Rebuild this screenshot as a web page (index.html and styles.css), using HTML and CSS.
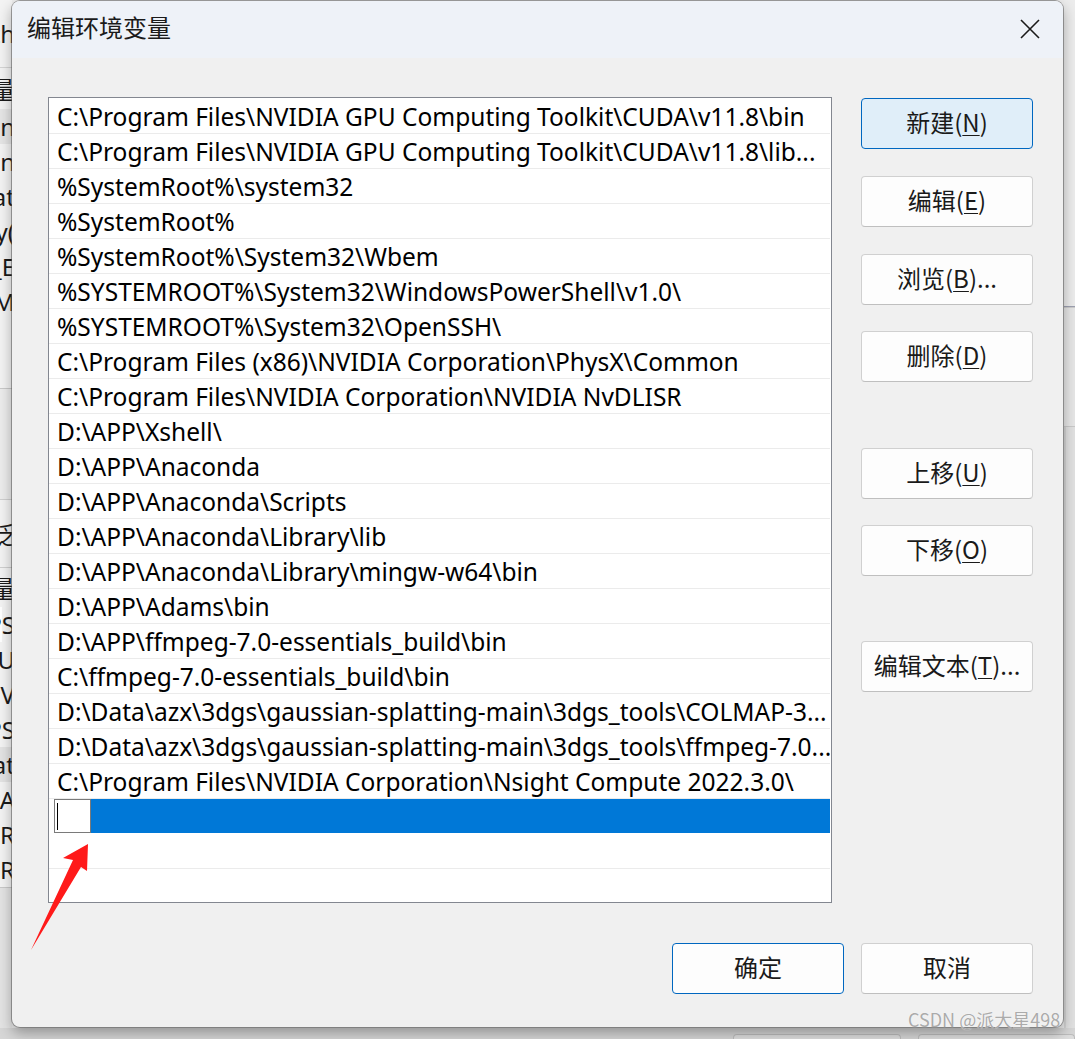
FILE: index.html
```html
<!DOCTYPE html>
<html lang="zh-CN">
<head>
<meta charset="utf-8">
<title>编辑环境变量</title>
<link rel="stylesheet" href="styles.css">
</head>
<body>
<div class="desktop">
  <div class="back-left">
    <div class="bl-top"><span>Path</span></div>
    <div class="bl-head"><span>变量</span></div>
    <div class="bl-row sel"><span>Path_in</span></div>
    <div class="bl-row"><span>Path_in</span></div>
    <div class="bl-row"><span>Path_at</span></div>
    <div class="bl-row"><span>Path_y(</span></div>
    <div class="bl-row"><span>Path_E</span></div>
    <div class="bl-row"><span>Path_M</span></div>
    <div class="bl-gap1"></div>
    <div class="bl-band"></div>
    <div class="bl-sec"><span>系统泛</span></div>
    <div class="bl-head2"><span>变量</span></div>
    <div class="bl-row mark"><span>PS</span></div>
    <div class="bl-row"><span>PU</span></div>
    <div class="bl-row"><span>PV</span></div>
    <div class="bl-row"><span>PS</span></div>
    <div class="bl-row sel2"><span>Pat</span></div>
    <div class="bl-row"><span>PA</span></div>
    <div class="bl-row"><span>PR</span></div>
    <div class="bl-row"><span>PR</span></div>
    <div class="bl-bottom"></div>
  </div>
  <div class="back-mid"></div>
  <div class="back-right">
    <div class="br-a"></div>
    <div class="br-b"></div>
    <div class="br-c"></div>
  </div>
  <div class="back-bottom">
    <div class="bb-btn one"></div>
    <div class="bb-btn two"></div>
  </div>
</div>

<div class="dialog">
  <div class="titlebar">
    <span class="title">编辑环境变量</span>
    <svg class="close" width="20" height="20" viewBox="0 0 20 20"><path d="M1 1 L19 19 M19 1 L1 19" stroke="#1a1a1a" stroke-width="1.6" fill="none"/></svg>
  </div>
  <div class="body">
    <div class="main">
      <div class="list">
        <div class="row">C:\Program Files\NVIDIA GPU Computing Toolkit\CUDA\v11.8\bin</div>
        <div class="row">C:\Program Files\NVIDIA GPU Computing Toolkit\CUDA\v11.8\lib...</div>
        <div class="row">%SystemRoot%\system32</div>
        <div class="row">%SystemRoot%</div>
        <div class="row">%SystemRoot%\System32\Wbem</div>
        <div class="row">%SYSTEMROOT%\System32\WindowsPowerShell\v1.0\</div>
        <div class="row">%SYSTEMROOT%\System32\OpenSSH\</div>
        <div class="row">C:\Program Files (x86)\NVIDIA Corporation\PhysX\Common</div>
        <div class="row">C:\Program Files\NVIDIA Corporation\NVIDIA NvDLISR</div>
        <div class="row">D:\APP\Xshell\</div>
        <div class="row">D:\APP\Anaconda</div>
        <div class="row">D:\APP\Anaconda\Scripts</div>
        <div class="row">D:\APP\Anaconda\Library\lib</div>
        <div class="row">D:\APP\Anaconda\Library\mingw-w64\bin</div>
        <div class="row">D:\APP\Adams\bin</div>
        <div class="row">D:\APP\ffmpeg-7.0-essentials_build\bin</div>
        <div class="row">C:\ffmpeg-7.0-essentials_build\bin</div>
        <div class="row">D:\Data\azx\3dgs\gaussian-splatting-main\3dgs_tools\COLMAP-3...</div>
        <div class="row">D:\Data\azx\3dgs\gaussian-splatting-main\3dgs_tools\ffmpeg-7.0...</div>
        <div class="row">C:\Program Files\NVIDIA Corporation\Nsight Compute 2022.3.0\</div>
        <div class="row editing"><div class="editbox"><span class="caret"></span></div><div class="selfill"></div></div>
        <div class="row empty"></div>
      </div>
      <div class="side">
        <button class="btn primary b-new">新建(<u>N</u>)</button>
        <button class="btn b-edit">编辑(<u>E</u>)</button>
        <button class="btn b-browse">浏览(<u>B</u>)...</button>
        <button class="btn b-del">删除(<u>D</u>)</button>
        <button class="btn b-up">上移(<u>U</u>)</button>
        <button class="btn b-down">下移(<u>O</u>)</button>
        <button class="btn b-text">编辑文本(<u>T</u>)...</button>
      </div>
    </div>
    <div class="footer">
      <button class="btn ok">确定</button>
      <button class="btn">取消</button>
    </div>
  </div>
</div>

<svg class="arrow" width="70" height="110" viewBox="0 0 70 110">
  <polygon points="58,3 33,17 43,19 1,109 51,26 57,30" fill="#ff1a1a"/>
</svg>

<div class="watermark">CSDN @派大星498</div>
</body>
</html>
```

FILE: styles.css
```css
* { box-sizing: border-box; }
html, body { margin: 0; padding: 0; }
body {
  width: 1075px;
  height: 1039px;
  overflow: hidden;
  position: relative;
  background: #f0f0f0;
  font-family: "Noto Sans", "Noto Sans CJK SC", sans-serif;
  color: #000;
}

/* ---------- background window ---------- */
.desktop {
  display: grid;
  grid-template-columns: 12px 1fr 11px;
  grid-template-rows: 1028px 11px;
  height: 1039px;
}
.back-left {
  grid-column: 1; grid-row: 1;
  overflow: hidden;
  display: flex;
  flex-direction: column;
  background: #f3f3f3;
  font-size: 24px;
  color: #1a1a1a;
}
.back-left > div {
  display: flex;
  justify-content: flex-end;
  align-items: center;
  white-space: nowrap;
  flex: none;
}
.back-left span { margin-right: -3px; }
.bl-top { height: 68px; border-bottom: 1px solid #d4d4d4; }
.bl-head { height: 41px; }
.bl-row { height: 35px; }
.bl-row.sel { background: #e5e5e5; }
.bl-row.sel2 { background: #e3e3e3; }
.bl-row.mark { box-shadow: inset 2px 0 0 #fff; }
.bl-gap1 { height: 70px; border-bottom: 1px solid #c9c9c9; }
.bl-band { height: 111px; background: #ececec; border-bottom: 1px solid #cfcfcf; }
.bl-sec { height: 68px; border-bottom: 1px solid #cfcfcf; }
.bl-head2 { height: 39px; }
.bl-bottom { flex: 1 !important; background: #e3e3e3; border-top: 1px solid #c8c8c8; }

.back-mid { grid-column: 2; grid-row: 1; background: #ebebeb; }
.back-right {
  grid-column: 3; grid-row: 1;
  background: #e6e6e6;
  display: flex;
  flex-direction: column;
}
.br-a { height: 307px; background: #ececec; border-bottom: 1px solid #9da0b0; }
.br-b { height: 120px; border-bottom: 1px solid #c9c9c9; box-shadow: inset 0 18px 0 -17px #ccc; }
.br-c { flex: 1; background: #e1e1e1; border-left: 2px solid #d4d4d4; }

.back-bottom {
  grid-column: 1 / 4; grid-row: 2;
  background: #d6d6d6;
  display: flex;
  align-items: flex-end;
  padding-left: 733px;
  gap: 17px;
}
.bb-btn {
  height: 5px;
  width: 172px;
  border: 1px solid #bdbdbd;
  border-bottom: none;
  border-radius: 4px 4px 0 0;
  background: #dedede;
}
.bb-btn.two { width: 160px; }

/* ---------- dialog ---------- */
.dialog {
  position: absolute;
  left: 12px;
  top: 1px;
  width: 1051px;
  height: 1026px;
  background: #f0f0f0;
  border-radius: 8px;
  overflow: hidden;
  box-shadow: 0 0 0 1px rgba(90, 90, 90, 0.55), 0 6px 14px rgba(0, 0, 0, 0.32);
  display: flex;
  flex-direction: column;
  font-family: "Noto Sans", "Noto Sans CJK SC", sans-serif;
}
.titlebar {
  height: 57px;
  flex: none;
  background: #eef2f8;
  display: flex;
  align-items: center;
  justify-content: space-between;
  padding: 0 23px 0 15px;
}
.title {
  font-family: "Noto Sans CJK SC", sans-serif;
  font-size: 24px;
  color: #1b1b1b;
  line-height: 1;
  margin-bottom: 6px;
}
.close { display: block; margin-bottom: 2px; }

.body {
  flex: 1;
  padding: 39px 30px 33px 36px;
  display: flex;
  flex-direction: column;
}
.main {
  display: flex;
  gap: 29px;
  height: 806px;
}
.list {
  width: 784px;
  height: 806px;
  background: #fff;
  border: 1px solid #838790;
  padding: 1px 1px 0 0;
  overflow: hidden;
}
.row {
  height: 35px;
  border-bottom: 1px solid #ebebeb;
  padding-left: 8px;
  font-size: 24.5px;
  line-height: 35px;
  white-space: nowrap;
  overflow: hidden;
  letter-spacing: 0;
}
.row.editing {
  padding-left: 5px;
  display: flex;
  border-bottom: 1px solid #fff;
}
.editbox {
  width: 37px;
  height: 34px;
  border: 1px solid #7a7a7a;
  background: #fff;
  position: relative;
  flex: none;
}
.caret {
  position: absolute;
  left: 2px;
  top: 3px;
  width: 1px;
  height: 27px;
  background: #000;
}
.selfill { flex: 1; height: 34px; background: #0078d7; }

.side {
  width: 172px;
  display: flex;
  flex-direction: column;
  padding-top: 1px;
}
.btn {
  width: 172px;
  height: 51px;
  flex: none;
  border: 1px solid #d0d0d0;
  border-bottom-color: #bfbfbf;
  border-radius: 4px;
  background: #fdfdfd;
  font-family: "Noto Sans CJK SC", sans-serif;
  font-size: 24px;
  color: #1a1a1a;
  padding: 0 0 3px;
  margin: 0;
  line-height: 1;
}
.btn u { text-underline-offset: 3px; text-decoration-thickness: 1px; }
.btn.primary { background: #e0eef9; border-color: #0067c0; }
.b-edit { margin-top: 27px; }
.b-browse { margin-top: 27px; }
.b-del { margin-top: 26px; }
.b-up { margin-top: 66px; }
.b-down { margin-top: 26px; }
.b-text { margin-top: 65px; }

.footer {
  margin-top: 40px;
  display: flex;
  justify-content: flex-end;
  gap: 17px;
}
.btn.ok { border-color: #0067c0; }

/* ---------- overlays ---------- */
.arrow {
  position: absolute;
  left: 30px;
  top: 841px;
}
.watermark {
  position: absolute;
  left: 908px;
  top: 1008px;
  font-family: "Noto Sans CJK SC", sans-serif;
  font-size: 18px;
  line-height: 22px;
  color: rgba(160, 160, 160, 0.9);
  text-shadow: 0 0 1px rgba(255, 255, 255, 0.9);
  white-space: nowrap;
}
```
